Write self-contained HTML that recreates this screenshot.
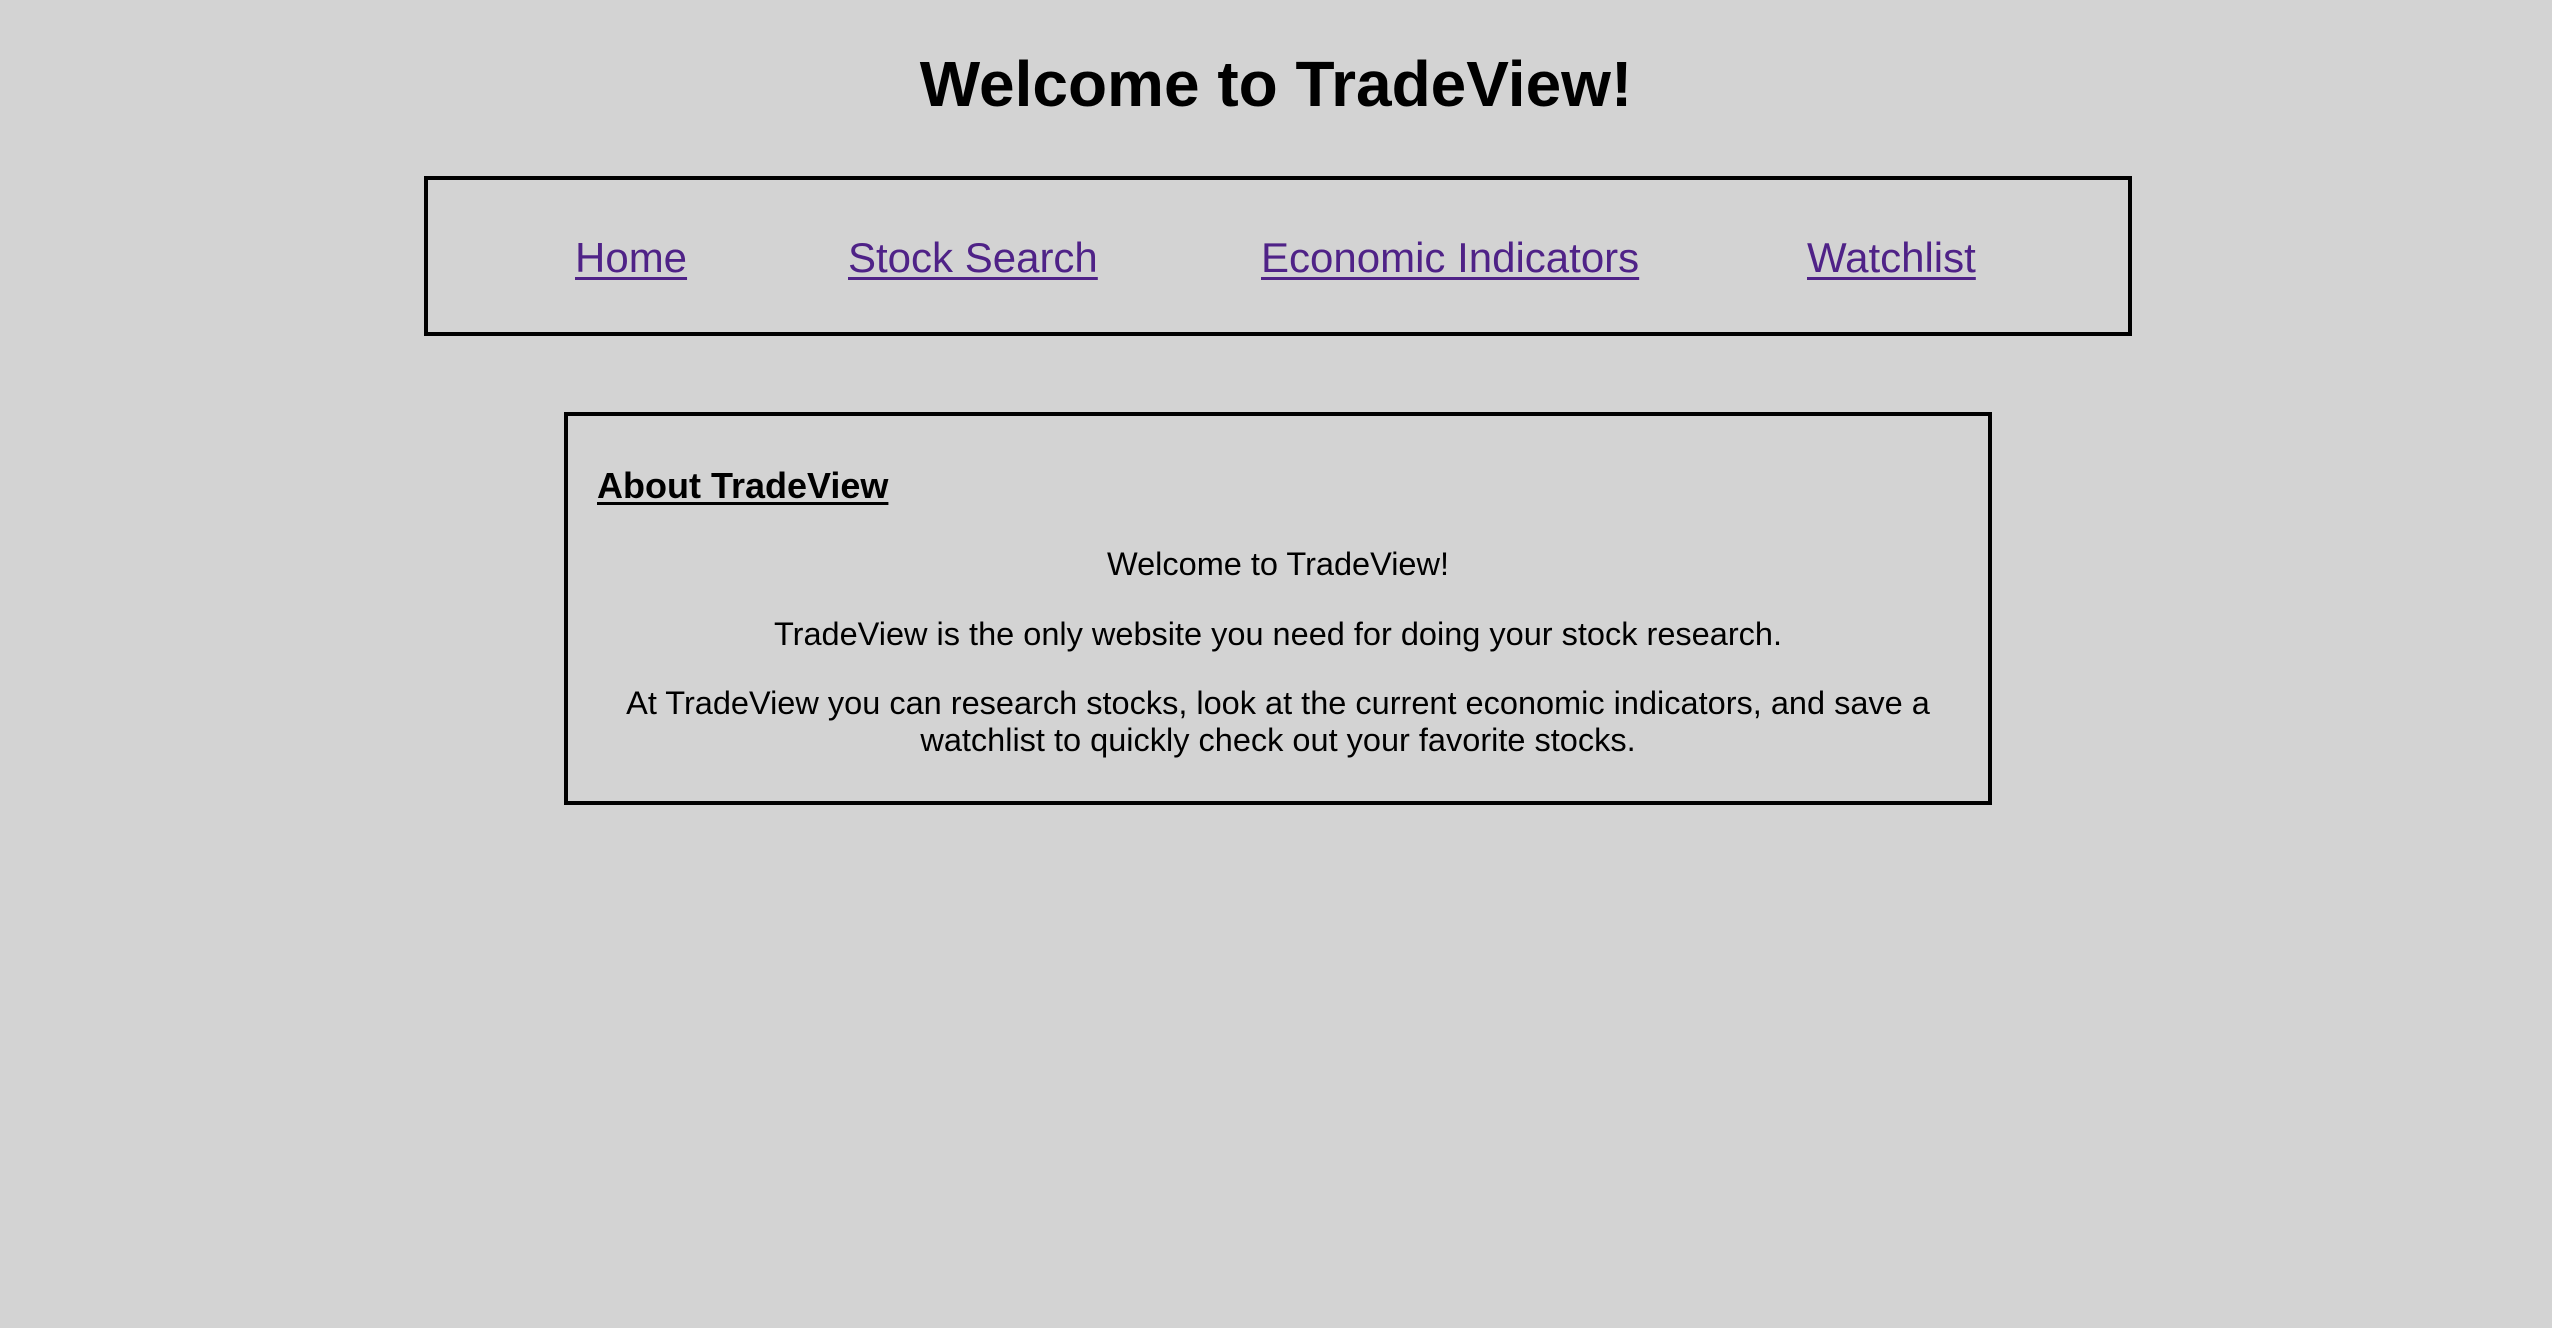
<!DOCTYPE html>
<html><head><meta charset="utf-8"><style>
html,body{margin:0;padding:0;}
body{width:2552px;height:1328px;background:#d3d3d3;position:relative;overflow:hidden;font-family:"Liberation Sans",Arial,sans-serif;color:#000;}
.a{position:absolute;line-height:1;white-space:nowrap;}
.box{position:absolute;border:4px solid #000;box-sizing:border-box;}
.nav{font-size:42px;color:#4f2287;text-decoration:underline;text-decoration-thickness:3px;text-underline-offset:5px;}
.p{font-size:32.5px;width:1426px;left:565px;text-align:center;}
</style></head><body>
<div class="a" style="left:0;width:2552px;text-align:center;top:52px;font-size:64px;font-weight:bold;">Welcome to TradeView!</div>
<div class="box" style="left:424px;top:176px;width:1708px;height:160px;"></div>
<div class="a nav" style="left:575px;top:237px;">Home</div>
<div class="a nav" style="left:848px;top:237px;">Stock Search</div>
<div class="a nav" style="left:1261px;top:237px;">Economic Indicators</div>
<div class="a nav" style="left:1807px;top:237px;">Watchlist</div>
<div class="box" style="left:564px;top:412px;width:1428px;height:393px;"></div>
<div class="a" style="left:597px;top:468px;font-size:36px;font-weight:bold;text-decoration:underline;text-decoration-thickness:3px;text-underline-offset:4px;">About TradeView</div>
<div class="a p" style="top:548px;">Welcome to TradeView!</div>
<div class="a p" style="top:618px;">TradeView is the only website you need for doing your stock research.</div>
<div class="a p" style="line-height:37px;top:685px;">At TradeView you can research stocks, look at the current economic indicators, and save a<br>watchlist to quickly check out your favorite stocks.</div>
</body></html>
